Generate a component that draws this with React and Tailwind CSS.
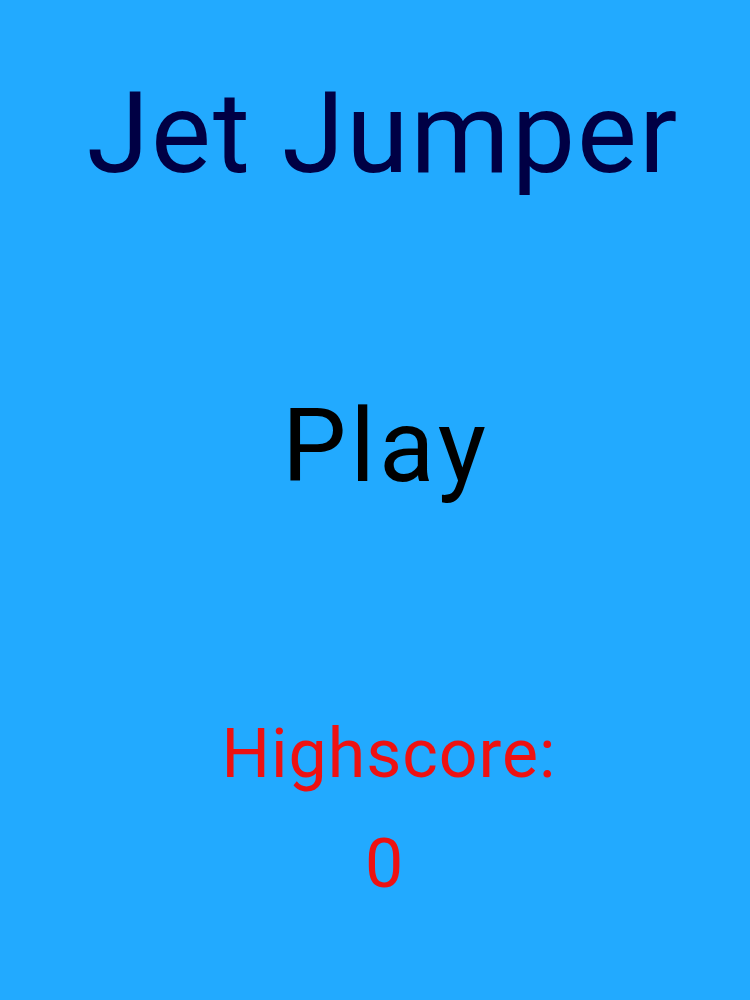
import React from 'react';

export default function App() {
    const highscore = 0;

    return (
        <div className="w-[750px] h-[1000px] bg-[#22aaff] flex flex-col items-center pl-[16px] font-['Roboto',sans-serif] leading-none">
            <h1 className="mt-[77px] text-[113px] tracking-[2px] text-[#000044]">Jet Jumper</h1>

            <button className="mt-[205px] text-[102px] tracking-[4px] pl-[6px] text-black leading-none">Play</button>

            <p className="mt-[223px] text-[68px] tracking-[1px] pl-[12px] text-[#ee1111]">Highscore:</p>
            <p className="mt-[42px] text-[68px] pl-[2px] text-[#ee1111]">{highscore}</p>
        </div>
    );
}
